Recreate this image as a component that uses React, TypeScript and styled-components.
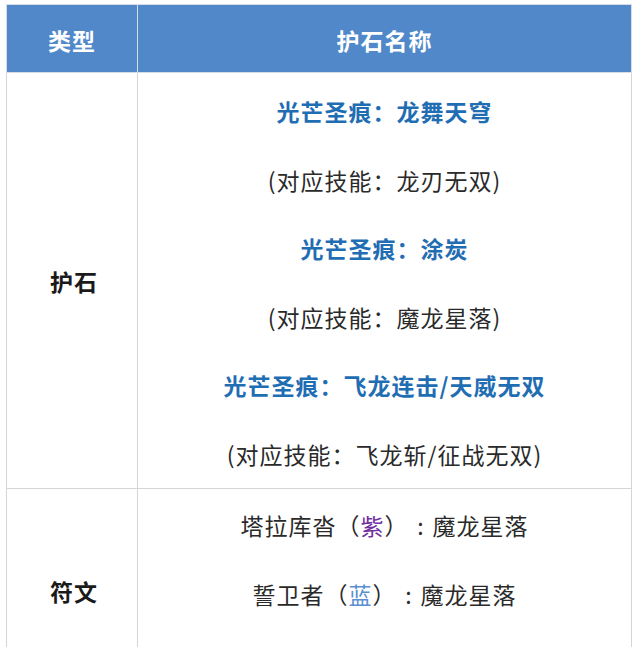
import React from "react";
import styled, { createGlobalStyle } from "styled-components";

const Global = createGlobalStyle`
  html, body {
    margin: 0;
    padding: 0;
    background: #ffffff;
  }
  body {
    font-family: "Noto Sans CJK SC", "Noto Sans", sans-serif;
  }
`;

const Page = styled.div`
  padding: 4px 0 0 6px;
  width: 638px;
  height: 647px;
  box-sizing: border-box;
  overflow: hidden;
`;

const Table = styled.table`
  border-collapse: collapse;
  width: 626px;
  table-layout: fixed;
  font-size: 23px;
  letter-spacing: 1px;
`;

const HeadCell = styled.th<{ $w?: number }>`
  width: ${(p) => (p.$w ? `${p.$w}px` : "auto")};
  height: 68px;
  padding: 3px 0 0;
  box-sizing: border-box;
  background: #5088ca;
  color: #ffffff;
  font-weight: 700;
  text-align: center;
  border: 1px solid #d6dde6;
`;

const TypeCell = styled.td`
  border: 1px solid #d5d5d5;
  text-align: center;
  vertical-align: middle;
  font-weight: 700;
  color: #1a1a1a;
  padding: 0 0 0 4px;
`;

const NameCell = styled.td<{ $top: number; $bottom?: number }>`
  border: 1px solid #d5d5d5;
  text-align: center;
  vertical-align: top;
  padding: ${(p) => p.$top}px 0 ${(p) => p.$bottom ?? 0}px;
`;

const Line = styled.div<{ $tone?: "title" | "plain" }>`
  height: 68.5px;
  line-height: 68.5px;
  white-space: nowrap;
  color: ${(p) => (p.$tone === "title" ? "#1f6db3" : "#2a2a2a")};
  font-weight: ${(p) => (p.$tone === "title" ? 700 : 400)};
`;

const Tint = styled.span<{ $c: string }>`
  color: ${(p) => p.$c};
`;

const Colon = styled.span`
  display: inline-block;
  width: 24px;
  text-align: center;
  letter-spacing: 0;
`;

const stones = [
  { title: "光芒圣痕：龙舞天穹", skill: "(对应技能：龙刃无双)" },
  { title: "光芒圣痕：涂炭", skill: "(对应技能：魔龙星落)" },
  { title: "光芒圣痕：飞龙连击/天威无双", skill: "(对应技能：飞龙斩/征战无双)" },
];

export default function App() {
  return (
    <>
      <Global />
      <Page>
        <Table>
          <thead>
            <tr>
              <HeadCell $w={131}>类型</HeadCell>
              <HeadCell>护石名称</HeadCell>
            </tr>
          </thead>
          <tbody>
            <tr>
              <TypeCell>护石</TypeCell>
              <NameCell $top={4}>
                {stones.map((s) => (
                  <React.Fragment key={s.title}>
                    <Line $tone="title">{s.title}</Line>
                    <Line>{s.skill}</Line>
                  </React.Fragment>
                ))}
              </NameCell>
            </tr>
            <tr>
              <TypeCell>符文</TypeCell>
              <NameCell $top={2} $bottom={64}>
                <Line>
                  塔拉库沓（<Tint $c="#7030a0">紫</Tint>）<Colon>:</Colon>魔龙星落
                </Line>
                <Line>
                  誓卫者（<Tint $c="#5b8fd0">蓝</Tint>）<Colon>:</Colon>魔龙星落
                </Line>
              </NameCell>
            </tr>
          </tbody>
        </Table>
      </Page>
    </>
  );
}
